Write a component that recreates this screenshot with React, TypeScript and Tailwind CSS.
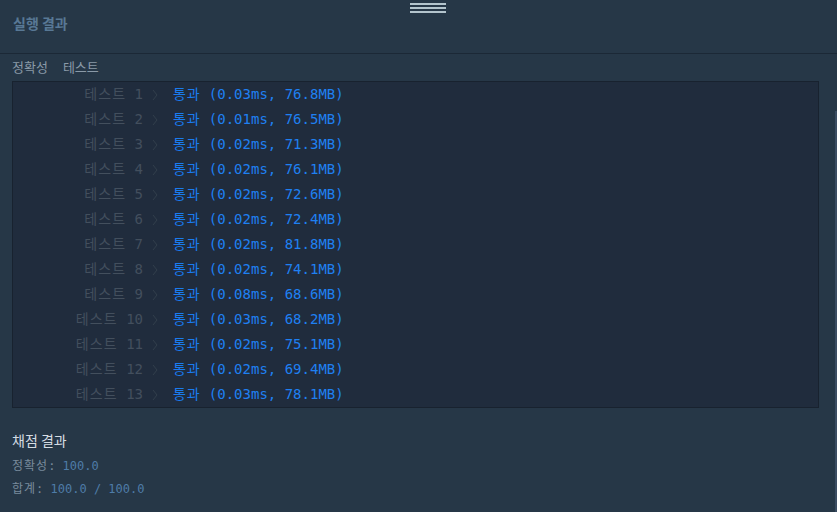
const rows: [string, string][] = [
  ["0.03", "76.8"],
  ["0.01", "76.5"],
  ["0.02", "71.3"],
  ["0.02", "76.1"],
  ["0.02", "72.6"],
  ["0.02", "72.4"],
  ["0.02", "81.8"],
  ["0.02", "74.1"],
  ["0.08", "68.6"],
  ["0.03", "68.2"],
  ["0.02", "75.1"],
  ["0.02", "69.4"],
  ["0.03", "78.1"],
];

const mono = "font-['DejaVu_Sans_Mono','Noto_Sans_CJK_KR',monospace]";
const sans = "font-['Noto_Sans_CJK_KR','Noto_Sans',sans-serif]";

function Chevron() {
  return (
    <svg width="6" height="12" viewBox="0 0 6 12" className="shrink-0">
      <path d="M1 1 L5 6 L1 11" fill="none" stroke="#323f4c" strokeWidth="1" />
    </svg>
  );
}

export default function App() {
  return (
    <div className="relative w-[837px] h-[512px] overflow-hidden bg-[#263747]">
      {/* drag handle */}
      <div className="absolute left-[410px] top-[3px] flex flex-col gap-[2px]">
        <div className="w-[36px] h-[2px] bg-[#b3c4cd]" />
        <div className="w-[36px] h-[2px] bg-[#b3c4cd]" />
        <div className="w-[36px] h-[2px] bg-[#b3c4cd]" />
      </div>
      {/* scrollbar */}
      <div className="absolute left-[835px] top-[111px] w-[2px] h-[401px] bg-[#3a4c62]" />

      <div className={`h-[54px] border-b border-[#1b2836] px-[13px] pt-[10px] ${sans}`}>
        <span className="text-[14px] font-bold text-[#587895] leading-[20px]">실행 결과</span>
      </div>

      <div className={`flex gap-[15px] px-[12px] pt-[3px] h-[27px] text-[13px] leading-[20px] text-[#8a9aa8] ${sans}`}>
        <span>정확성</span>
        <span>테스트</span>
      </div>

      <div className={`ml-[12px] mr-[18px] border border-[#18222f] bg-[#202c3d] ${mono} text-[14px]`}>
        {rows.map(([t, m], i) => (
          <div key={i} className="flex items-center h-[25px] whitespace-pre">
            <span className="w-[130px] text-right text-[#434f5d]">
              <span className="tracking-[1.1px]">테스트</span>
              {` ${i + 1}`}
            </span>
            <span className="ml-[9px] flex items-center">
              <Chevron />
            </span>
            <span className="ml-[15px] text-[#1f80f2]">
              <span className="tracking-[0.8px] text-[#1a7cf0]">통과</span>
              {` (${t}ms, ${m}MB)`}
            </span>
          </div>
        ))}
      </div>

      <div className="px-[12px] pt-[22px]">
        <div className={`text-[14px] leading-[20px] text-[#d5dce3] ${sans}`}>채점 결과</div>
        <div className={`mt-[8px] text-[12px] leading-[16px] whitespace-pre ${mono}`}>
          <span className="text-[#798b9c]">
            <span className="tracking-[1px]">정확성</span>:{" "}
          </span>
          <span className="text-[#4e7ca8]">100.0</span>
        </div>
        <div className={`mt-[7px] text-[12px] leading-[16px] whitespace-pre ${mono}`}>
          <span className="text-[#798b9c]">
            <span className="tracking-[1px]">합계</span>:{" "}
          </span>
          <span className="text-[#4e7ca8]">100.0 / 100.0</span>
        </div>
      </div>
    </div>
  );
}
